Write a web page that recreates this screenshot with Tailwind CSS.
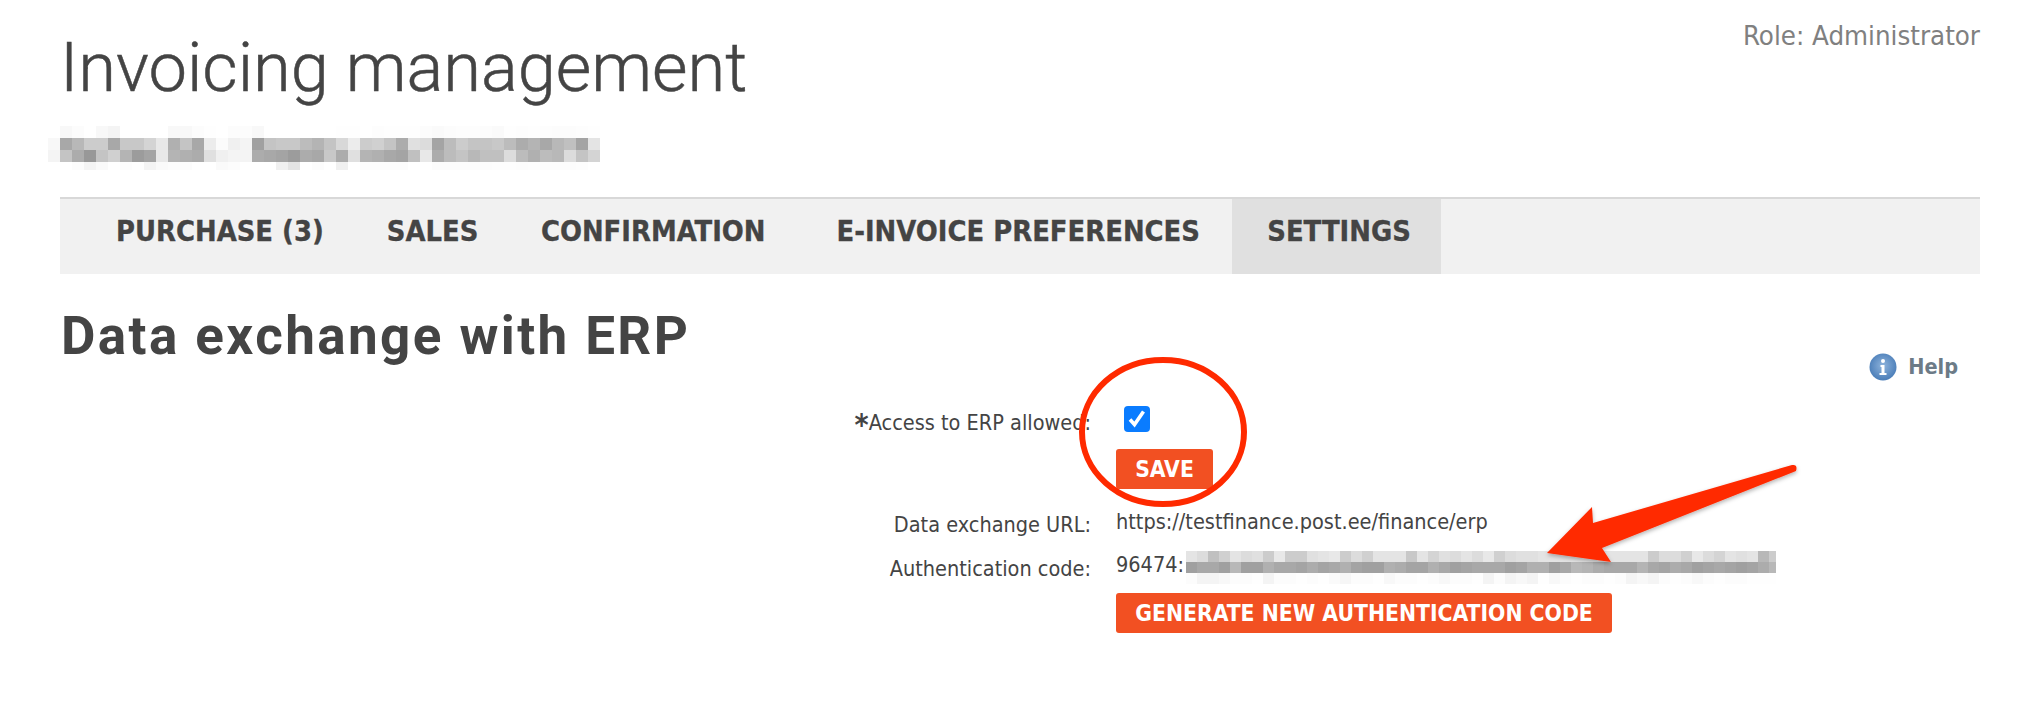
<!DOCTYPE html>
<html>
<head>
<meta charset="utf-8">
<script src="https://cdn.jsdelivr.net/npm/@tailwindcss/browser@4"></script>
</head>
<body class="bg-white">
<div class="relative w-[2042px] h-[706px] overflow-hidden pl-[60px] pr-[62px] text-[#444444] font-['DejaVu_Sans_Condensed','DejaVu_Sans',sans-serif]">
  <header class="flex justify-between h-[197px]">
    <div class="flex flex-col">
      <h1 class="mt-[46px] h-[60px] leading-[44px] text-[68.6px] font-light [-webkit-text-stroke:0.5px_#444444] font-['Roboto',sans-serif]">Invoicing management</h1>
      <svg id="orgblur" class="-ml-[12px] mt-[20px]" width="560" height="44"></svg>
    </div>
    <div class="pt-[21px] text-[27.4px] leading-[30px] text-[#808080]">Role: Administrator</div>
  </header>
  <nav class="flex h-[77px] pl-[23px] border-t-2 border-[#d8d8d8] bg-[#f1f1f1] text-[28.8px] font-bold leading-[30px] [-webkit-text-stroke:0.3px_#444444]">
    <a class="pl-[33px] pr-[30px] pt-[17px]">PURCHASE (3)</a>
    <a class="pl-[33px] pr-[29.5px] pt-[17px]">SALES</a>
    <a class="pl-[33px] pr-[38px] pt-[17px]">CONFIRMATION</a>
    <a class="pl-[33px] pr-[31.7px] pt-[17px]">E-INVOICE PREFERENCES</a>
    <a class="pl-[35.6px] pr-[30.4px] pt-[17px] bg-[#e0e0e0]">SETTINGS</a>
  </nav>
  <div class="flex justify-between">
    <h2 class="mt-[32px] ml-px text-[53px] leading-[60px] font-bold tracking-[2.4px] font-['Roboto',sans-serif]">Data exchange with ERP</h2>
    <div class="mt-[79px] mr-[22px] flex items-center gap-[11px] h-[28px] text-[#6c7b87] text-[21.5px] font-bold">
      <svg width="28" height="28" viewBox="0 0 28 28">
        <defs><radialGradient id="g" cx="50%" cy="45%" r="55%"><stop offset="0" stop-color="#8fb4dc"/><stop offset="1" stop-color="#4a7db8"/></radialGradient></defs>
        <circle cx="14" cy="14" r="13.5" fill="url(#g)"/>
        <circle cx="14" cy="8" r="2" fill="#fff"/>
        <path d="M11.5 12h4v8h2v2h-7v-2h2v-6h-1z" fill="#fff"/>
      </svg>
      <span>Help</span>
    </div>
  </div>
  <form class="grid grid-cols-[1031px_1fr] gap-x-[25px] text-[21.5px] leading-[26px] mt-[25px]">
    <label class="text-right pt-[4px]"><span class="text-[30px] leading-[20px] font-bold align-[-5px]">*</span>Access to ERP allowed:</label>
    <div class="h-[43px] pl-[8px]">
      <span class="flex items-center justify-center w-[26px] h-[26px] rounded-[4px] bg-[#0a7cff]">
        <svg width="22" height="22" viewBox="0 0 22 22"><path d="M4 11.5l4.5 5 9-13" fill="none" stroke="#fff" stroke-width="3.6"/></svg>
      </span>
    </div>
    <div></div>
    <div class="h-[60px]"><button type="button" class="w-[97px] h-[40px] rounded-[3px] bg-[#f25022] text-white text-[22.7px] font-bold">SAVE</button></div>
    <label class="text-right pt-[3px] h-[44px]">Data exchange URL:</label>
    <div>https://testfinance.post.ee/finance/erp</div>
    <label class="text-right pt-[3px] h-[40px]">Authentication code:</label>
    <div class="-mt-[1px]">96474:</div>
    <div></div>
    <div><button type="button" class="w-[496px] h-[40px] rounded-[3px] bg-[#f25022] text-white text-[22.7px] font-bold">GENERATE NEW AUTHENTICATION CODE</button></div>
  </form>
  <svg id="codeblur" class="absolute left-[1186px] top-[551px]" width="590" height="34"></svg>
  <svg class="absolute left-0 top-0 pointer-events-none" width="2042" height="706">
    <defs><filter id="s" x="-10%" y="-20%" width="120%" height="150%"><feDropShadow dx="0" dy="2" stdDeviation="2" flood-color="#000" flood-opacity="0.3"/></filter></defs>
    <ellipse cx="1163" cy="432" rx="81" ry="72" fill="none" stroke="#ff2a00" stroke-width="6"/>
    <path d="M1547 553L1592 507L1593 523L1792 465Q1798 464 1796 471L1602 548L1611 562Z" fill="#ff2a00" filter="url(#s)"/>
  </svg>
</div>
<script>
  function mosaic(id, size, rows) {
    var svg = document.getElementById(id);
    var out = '';
    rows.forEach(function (row, r) {
      row.split(' ').forEach(function (v, c) {
        out += '<rect x="' + c * size + '" y="' + r * size + '" width="' + size + '" height="' + size + '" fill="#' + v + v + v + '"/>';
      });
    });
    svg.innerHTML = out;
  }
  mosaic('orgblur', 12, [
    'ff f8 fc ff f8 f4 ff ff ff ff f8 f8 fc fe ff fc fc f8 ff ff ff ff ff ff fe fe ff fd fe fe fe fc fa fc fd fd fc fa fe fd fe fd fc fc fd fe',
    'f8 a8 b8 cc cc a8 c8 c8 d4 e8 b0 c4 a8 ec fb f0 f4 a0 c4 c8 c8 bc b4 c4 d8 ec cc d0 c4 ac e0 dc a4 bc cc c4 c4 c8 bc ac b4 a8 b8 c0 a4 e4',
    'f4 c4 ac 98 c4 d0 b4 9c a4 e8 b4 b0 ac e0 f0 f4 f4 ac a8 a4 9c ac a8 c8 ac e0 b4 b0 a8 a4 c0 e8 ac bc c4 b8 c0 c0 dc bc b0 bc b8 dc c4 d4',
    'ff ff fc f4 fa ff fc fe f4 fa fc fc ff ff fa fc ff ff ff f0 e4 ff fc ff f0 ff fc fc fc fc ff ff fc fc fc fc fc fd fd fc fd fc fc fc fd ff'
  ]);
  mosaic('codeblur', 11, [
    'e4 dc c0 d0 e4 dc e0 cc e8 cc cc e0 e4 e8 cc dc d0 e4 e4 e4 c8 e4 d4 e0 dc e4 dc e8 d0 dc e0 e0 e4 e4 e4 e4 e4 e4 e4 e4 e4 e4 cc dc dc d0 e8 dc d4 e4 e0 e4 b8 cc',
    'a0 a8 a8 a0 b8 a0 a0 b0 a8 a8 a4 ac a4 a8 b0 a4 a0 a0 b0 ac a4 a4 b0 a8 a0 a4 a8 a8 a8 a0 a4 b0 b0 a0 a8 b8 b4 ac a8 a8 a8 b4 a8 a4 ac a8 a0 a4 a8 a4 a0 a4 ac b8 fa',
    'fc f4 f4 f8 fc fc fe f4 fc fc fe fc fe fa f6 fc fc fe f8 fc fc fe fc f8 fc fc fe f4 fc f4 f8 f4 fe f8 fc fe fc fc fe fc f4 f8 f4 fc fe fc f8 fc fe fc fc fe fe fe fe'
  ]);
</script>
</body>
</html>
